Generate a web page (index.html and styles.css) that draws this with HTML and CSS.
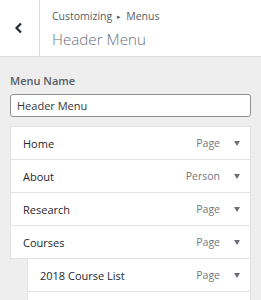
FILE: index.html
```html
<!DOCTYPE html>
<html>
<head>
<meta charset="utf-8">
<link rel="stylesheet" href="styles.css">
</head>
<body>
<div class="header">
  <div class="back">
    <svg width="10" height="12" viewBox="0 0 10 12"><polyline points="7,1.5 2.5,6 7,10.5" fill="none" stroke="#23282d" stroke-width="2.2"/></svg>
  </div>
  <div class="titles">
    <div class="crumb">Customizing<span class="sep">▸</span>Menus</div>
    <div class="title">Header Menu</div>
  </div>
</div>
<div class="content">
  <div class="label">Menu Name</div>
  <div class="input">Header Menu</div>
  <div class="items">
    <div class="item"><span class="name">Home</span><span class="type">Page</span><span class="arrow"></span></div>
    <div class="item"><span class="name">About</span><span class="type">Person</span><span class="arrow"></span></div>
    <div class="item"><span class="name">Research</span><span class="type">Page</span><span class="arrow"></span></div>
    <div class="item"><span class="name">Courses</span><span class="type">Page</span><span class="arrow"></span></div>
    <div class="item child"><span class="name">2018 Course List</span><span class="type">Page</span><span class="arrow"></span></div>
    <div class="item child"><span class="name">&nbsp;</span><span class="type"></span></div>
  </div>
</div>
</body>
</html>
```
FILE: styles.css
```css
html, body { margin: 0; padding: 0; }
body {
  background: #eeeeee;
  font-family: "Open Sans", "Noto Sans", sans-serif;
  color: #23282d;
  width: 261px;
  height: 300px;
  overflow: hidden;
}
.header {
  display: flex;
  height: 56px;
  background: #fff;
  border-bottom: 1px solid #dddddd;
}
.back {
  width: 38px;
  border-right: 1px solid #dddddd;
  display: flex;
  align-items: center;
  justify-content: center;
  padding-right: 1px;
}
.back svg { display: block; }
.titles {
  padding-left: 12px;
  padding-top: 9px;
}
.crumb {
  font-size: 10.5px;
  line-height: 14px;
  color: #555d66;
}
.sep {
  font-size: 7px;
  position: relative;
  top: -1px;
  margin: 0 5px 0 5px;
}
.title {
  font-size: 15.2px;
  font-weight: 300;
  line-height: 22px;
  color: #6b7279;
  margin-top: 3px;
}
.content {
  padding: 16px 10px 0 10px;
}
.label {
  font-size: 11px;
  font-weight: 600;
  line-height: 15px;
  color: #555d66;
}
.input {
  margin-top: 6px;
  height: 21px;
  border: 1px solid #8c8f94;
  border-radius: 3px;
  background: #fff;
  padding: 0 6px;
  font-size: 11px;
  line-height: 21px;
  color: #32373c;
}
.items { margin-top: 10px; }
.item {
  display: flex;
  align-items: center;
  height: 32px;
  background: #fff;
  border: 1px solid #e2e2e2;
  margin-top: -1px;
  padding: 0 10px 0 12px;
  font-size: 11px;
}
.item.child { margin-left: 17px; }
.name {
  flex: 1;
  color: #23282d;
  font-weight: 500;
}
.type {
  color: #72777c;
  font-size: 10.5px;
}
.arrow {
  width: 0; height: 0;
  border-left: 3px solid transparent;
  border-right: 3px solid transparent;
  border-top: 5px solid #6b7076;
  margin-left: 14px;
}
```
